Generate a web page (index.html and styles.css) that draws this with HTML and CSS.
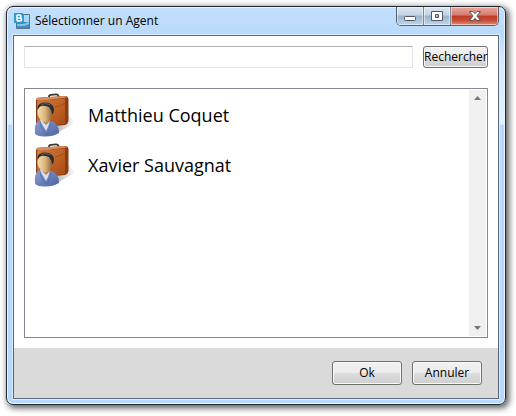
FILE: index.html
```html
<!DOCTYPE html>
<html lang="fr">
<head>
<meta charset="utf-8">
<title>Sélectionner un Agent</title>
<link rel="stylesheet" href="styles.css">
</head>
<body>
<svg class="defs" width="0" height="0" aria-hidden="true">
  <defs>
    <linearGradient id="leather" x1="0" y1="0" x2="1" y2="1"><stop offset="0" stop-color="#cd7c40"/><stop offset=".5" stop-color="#bf6428"/><stop offset="1" stop-color="#a84a14"/></linearGradient>
    <linearGradient id="skin" x1="0" y1="0" x2="1" y2="0"><stop offset="0" stop-color="#f6dfae"/><stop offset=".5" stop-color="#ddb57c"/><stop offset="1" stop-color="#8a6034"/></linearGradient>
    <linearGradient id="coat" x1="0" y1="0" x2="1" y2="1"><stop offset="0" stop-color="#8fa3d2"/><stop offset="1" stop-color="#4c62a0"/></linearGradient>
    <linearGradient id="shade" x1="0" y1="0" x2="1" y2="0"><stop offset="0" stop-color="#888"/><stop offset="1" stop-color="#fff"/></linearGradient>
    <symbol id="agent" viewBox="0 0 42 44">
      <path d="M20 42 42 29 34 22 18 33Z" fill="url(#shade)" opacity=".7"/>
      <path d="M15 5V3.500Q15 2 17 1.800L22 1.300Q24 1.200 24.500 3V4" fill="none" stroke="#3a3634" stroke-width="1.800"/>
      <path d="M2 7Q2 5 4 4.800L31 3Q34 3 34.500 6V28Q34 31 31 32L10 34 2 30Z" fill="#8b3c10"/>
      <path d="M2 7Q2 5 4 4.800L31 3 33 4.500 6 8Z" fill="#d98e57"/>
      <path d="M3 8 31 5.500V31L10 33 3 30Z" fill="url(#leather)"/>
      <path d="M21 14Q27 13 31 10" fill="none" stroke="#94450f" stroke-width=".7"/>
      <path d="M1 41Q0 31 4 28L9 26 17 28Q25 30 25 40Q18 44 10 43.500Q4 43.500 1 41Z" fill="url(#coat)"/>
      <path d="M6 27.500 9 25 16 27.500 14 34 12 38Z" fill="#d6e2f3"/>
      <path d="M8 24 16 23 16 28 12 32 8 28Z" fill="#b3824c"/>
      <path d="M16 28 17 31 13 42M6 28 6.500 32 11.500 41" fill="none" stroke="#5068a5" stroke-width=".7"/>
      <path d="M3.500 18Q4 12 11 12Q18.500 12 18.500 19Q18 28 11.500 29.500Q5 28.500 3.500 20Z" fill="url(#skin)"/>
      <path d="M3.500 14Q5 9.500 11 9.500Q19 9.500 20 16Q20 20 18.500 21.500Q17.500 20 17.500 18L15 14Q10 12 7 13Q4.500 14 3.800 17Z" fill="#252c30"/>
      <path d="M7 11.500Q12 9.500 16.500 12" fill="none" stroke="#59646b"/>
    </symbol>
  </defs>
</svg>
<main class="window">
  <header class="titlebar">
    <svg class="app-icon" viewBox="0 0 16 16" aria-hidden="true">
      <path d="M2.500 1.500H15.500V15.500H2.500Z" fill="#3d8fc4" stroke="#5a7488"/>
      <path d="M10 2H15V9H10Z" fill="#a9d8ef"/>
      <path d="M3 11Q9 12 15 9V11Q9 14 3 12.500Z" fill="#8ccbe8"/>
      <path d="M0 0H8.500L10 1.500V10H0Z" fill="#2f9bd0"/>
      <path d="M3 2V8M3 2H5.500Q7 2 7 3.500T5.500 5H3M5.500 5Q7.500 5 7.500 6.500T5.500 8H3" fill="none" stroke="#fff" stroke-width="1.500"/>
    </svg>
    <h1 class="title">Sélectionner un Agent</h1>
    <div class="captions">
      <button class="caption" type="button" aria-label="Réduire"><svg width="14" height="12" viewBox="0 0 14 12"><rect x="1.500" y="6.500" width="11" height="4" rx="1" fill="#fff" stroke="#535666"/></svg></button>
      <button class="caption" type="button" aria-label="Agrandir"><svg width="14" height="12" viewBox="0 0 14 12"><path d="M1.500 1.500H12.500V10.500H1.500ZM5.500 4.500V7.500H8.500V4.500Z" fill="#fff" fill-rule="evenodd" stroke="#535666"/></svg></button>
      <button class="caption close" type="button" aria-label="Fermer"><svg width="14" height="12" viewBox="0 0 14 12"><path d="M1.500 1.500H5L7 3.700 9 1.500H12.500L9 6 12.500 10.500H9L7 8.300 5 10.500H1.500L5 6Z" fill="#fff" stroke="#535666"/></svg></button>
    </div>
  </header>
  <section class="client">
    <div class="content">
      <form class="search">
        <input class="query" type="text" aria-label="Rechercher un agent">
        <button class="button find" type="button">Rechercher</button>
      </form>
      <div class="list">
        <ul class="agents">
          <li class="agent"><svg class="portrait" aria-hidden="true"><use href="#agent"/></svg><span>Matthieu Coquet</span></li>
          <li class="agent"><svg class="portrait" aria-hidden="true"><use href="#agent"/></svg><span>Xavier Sauvagnat</span></li>
        </ul>
        <div class="scrollbar" aria-hidden="true">
          <svg width="7" height="4" viewBox="0 0 7 4"><path d="M0 4 3.500 0 7 4Z" fill="#777"/></svg>
          <svg width="7" height="4" viewBox="0 0 7 4"><path d="M0 0 3.500 4 7 0Z" fill="#777"/></svg>
        </div>
      </div>
    </div>
    <footer class="actions">
      <button class="button" type="button">Ok</button>
      <button class="button" type="button">Annuler</button>
    </footer>
  </section>
</main>
</body>
</html>
```
FILE: styles.css
```css
* { box-sizing: border-box; }

body {
  display: flex;
  min-height: 100vh;
  margin: 0;
  padding: 6px 10px 11px 6px;
  background: #fff;
  color: #000;
  font: 12px/16px "Open Sans", "Noto Sans", sans-serif;
}

.defs { position: absolute; }

.window {
  flex: 1;
  display: flex;
  flex-direction: column;
  min-width: 0;
  padding: 0 6px 5px;
  border: 1px solid #20262e;
  border-radius: 7px;
  background: linear-gradient(#c3dffb 0, #b9dafb 28px, #d3e7fc 50px, #e3f1fe 117px, #b7d8fa 118px, #b7d8fa 100%);
  box-shadow: inset 0 0 0 1px #eaf6ff, 2px 2px 6px 1px rgba(0, 0, 0, .65);
}

.titlebar {
  display: flex;
  align-items: flex-start;
  height: 28px;
  padding-left: 1px;
}

.app-icon { width: 16px; height: 16px; margin-top: 6px; }

.title {
  flex: 1;
  margin: 6px 0 0 5px;
  font-size: 12px;
  font-weight: 400;
  line-height: 16px;
}

.captions {
  display: flex;
  overflow: hidden;
  border: 1px solid #59616f;
  border-top: 0;
  border-radius: 0 0 5px 5px;
}

.caption {
  display: flex;
  align-items: center;
  justify-content: center;
  width: 27px;
  height: 18px;
  padding: 0;
  border: 0;
  border-right: 1px solid #78879a;
  background: linear-gradient(#dce7f3 0, #c3d2e3 45%, #9bb2cb 50%, #bdd5ee 100%);
  box-shadow: inset 0 0 0 1px rgba(255, 255, 255, .5);
}

.close {
  width: 47px;
  border: 0;
  background: linear-gradient(#e9a99d 0, #d67b6b 45%, #bd3a26 50%, #c94e35 75%, #df8c72 100%);
}

.client {
  flex: 1;
  display: flex;
  flex-direction: column;
  border: 1px solid #5b6779;
  background: #fff;
  box-shadow: 0 0 0 1px #d9edff;
}

.content {
  flex: 1;
  display: flex;
  flex-direction: column;
  gap: 20px;
  padding: 10px;
}

.search { display: flex; gap: 10px; }

.query {
  flex: 1;
  min-width: 0;
  height: 22px;
  padding: 1px 3px;
  border: 1px solid #e2e3ea;
  border-top-color: #abadb3;
  border-radius: 1px;
  background: #fff;
  font: inherit;
}

.button {
  width: 70px;
  height: 24px;
  padding: 0;
  border: 1px solid #707070;
  border-radius: 3px;
  background: linear-gradient(#f2f2f2 0, #ebebeb 50%, #ddd 51%, #cfcfcf 100%);
  box-shadow: inset 0 0 0 1px #fafafa;
  color: #000;
  font: inherit;
}

.find { width: 65px; height: 22px; }

.list {
  flex: 1;
  display: flex;
  padding: 1px;
  border: 1px solid #828790;
}

.agents {
  flex: 1;
  margin: 0;
  padding: 0;
  list-style: none;
}

.agent {
  display: flex;
  align-items: center;
  gap: 12px;
  height: 50px;
  padding-left: 8px;
  font-size: 18px;
  line-height: 24px;
}

.portrait { width: 42px; height: 44px; }

.scrollbar {
  display: flex;
  flex-direction: column;
  align-items: center;
  justify-content: space-between;
  width: 17px;
  padding: 6px 0;
  background: #f0f0f0;
}

.actions {
  display: flex;
  justify-content: flex-end;
  gap: 10px;
  padding: 13px 16px;
  background: #dadada;
}
```
